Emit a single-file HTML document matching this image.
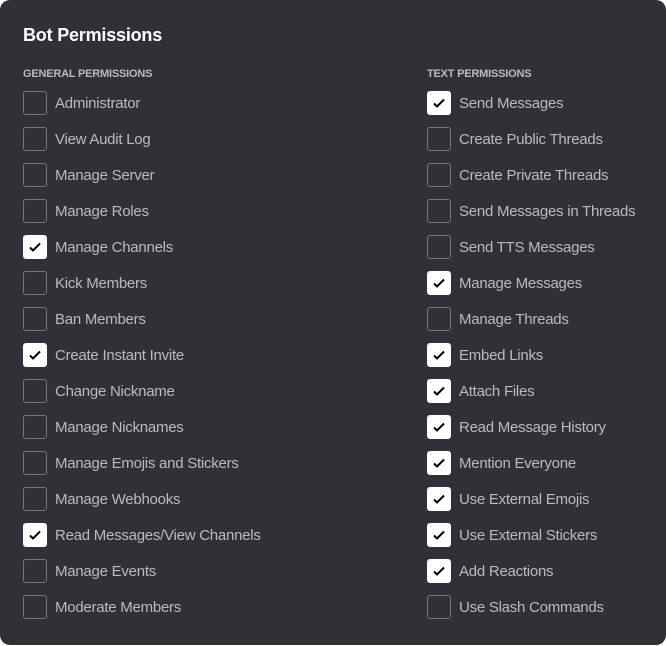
<!DOCTYPE html>
<html><head><style>
body{margin:0;width:666px;height:646px;background:#fff;overflow:hidden;font-family:"Liberation Sans",sans-serif}
.p{position:absolute;left:0;top:0;width:666px;height:645px;background:#2f3136;border-radius:10px}
h1{position:absolute;left:23px;top:25px;margin:0;font-size:18px;font-weight:600;color:#fff;letter-spacing:-0.2px}
.sh{position:absolute;top:68px;font-size:11px;font-weight:bold;color:#b9bbbe;letter-spacing:-0.2px}
.r{position:absolute;height:24px;display:flex;align-items:center;font-size:15px;color:#b9bbbe;letter-spacing:-0.25px}
.b{width:22px;height:22px;border:1px solid #72767d;border-radius:3px;margin-right:8px;box-sizing:content-box;display:flex;align-items:center;justify-content:center}
.c .b{background:#fff;border-color:#fff}
</style></head><body><div class="p">
<h1>Bot Permissions</h1>
<div class="sh" style="left:23px">GENERAL PERMISSIONS</div>
<div class="sh" style="left:427px">TEXT PERMISSIONS</div>
<div id="L"></div>
</div>
<script>
var L=[["Administrator",0],["View Audit Log",0],["Manage Server",0],["Manage Roles",0],["Manage Channels",1],["Kick Members",0],["Ban Members",0],["Create Instant Invite",1],["Change Nickname",0],["Manage Nicknames",0],["Manage Emojis and Stickers",0],["Manage Webhooks",0],["Read Messages/View Channels",1],["Manage Events",0],["Moderate Members",0]];
var R=[["Send Messages",1],["Create Public Threads",0],["Create Private Threads",0],["Send Messages in Threads",0],["Send TTS Messages",0],["Manage Messages",1],["Manage Threads",0],["Embed Links",1],["Attach Files",1],["Read Message History",1],["Mention Everyone",1],["Use External Emojis",1],["Use External Stickers",1],["Add Reactions",1],["Use Slash Commands",0]];
var h="",ck='<svg width="14" height="14" viewBox="0 0 14 14"><path d="M2 7.5l3 3 7-7" fill="none" stroke="#000" stroke-width="2"/></svg>';
function f(a,x){a.forEach(function(e,i){h+='<div class="r'+(e[1]?' c':'')+'" style="left:'+x+'px;top:'+(91+i*36)+'px"><div class="b">'+(e[1]?ck:'')+'</div>'+e[0]+'</div>';});}
f(L,23);f(R,427);
document.getElementById("L").outerHTML=h;
</script>
</body></html>
